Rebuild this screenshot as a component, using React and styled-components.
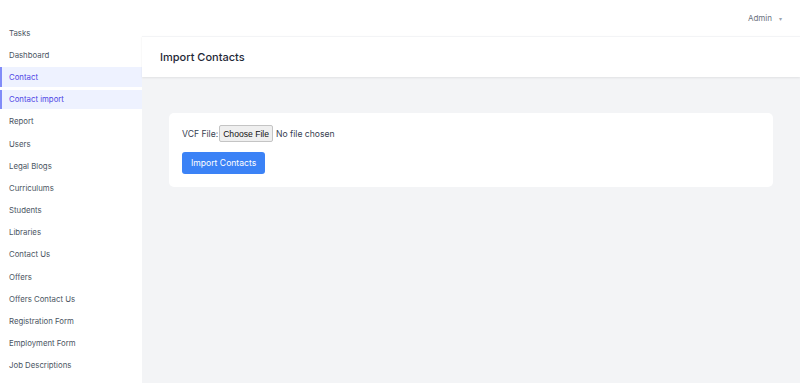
import React from "react";
import styled, { createGlobalStyle } from "styled-components";

const GlobalStyle = createGlobalStyle`
  html, body { margin: 0; padding: 0; background: #fff; }
  body { font-family: Inter, "Noto Sans", sans-serif; color: #374151; }
`;

const menu = [
  "Tasks",
  "Dashboard",
  "Contact",
  "Contact import",
  "Report",
  "Users",
  "Legal Blogs",
  "Curriculums",
  "Students",
  "Libraries",
  "Contact Us",
  "Offers",
  "Offers Contact Us",
  "Registration Form",
  "Employment Form",
  "Job Descriptions",
];
const activeItems = ["Contact", "Contact import"];

export default function App() {
  return (
    <>
      <GlobalStyle />
      <Page>
        <TopBar>
          <UserMenu>
            Admin <Caret>▾</Caret>
          </UserMenu>
        </TopBar>
        <Body>
          <Sidebar>
            {menu.map((m) => (
              <NavItem key={m} $active={activeItems.includes(m)}>
                {m}
              </NavItem>
            ))}
          </Sidebar>
          <Main>
            <Header>
              <Title>Import Contacts</Title>
            </Header>
            <Content>
              <Card>
                <FileRow>
                  <Label>VCF File:</Label>
                  <ChooseButton type="button">Choose File</ChooseButton>
                  <NoFile>No file chosen</NoFile>
                </FileRow>
                <SubmitButton type="button">Import Contacts</SubmitButton>
              </Card>
            </Content>
          </Main>
        </Body>
      </Page>
    </>
  );
}

const Page = styled.div`
  width: 800px;
  height: 383px;
  display: flex;
  flex-direction: column;
  overflow: hidden;
`;

const TopBar = styled.div`
  height: 36px;
  flex-shrink: 0;
  display: flex;
  align-items: center;
  justify-content: flex-end;
  padding-right: 18px;
  background: #fff;
`;

const UserMenu = styled.div`
  font-size: 8px;
  color: #6b7280;
  display: flex;
  align-items: center;
  gap: 7px;
`;

const Caret = styled.span`
  font-size: 6px;
  color: #9ca3af;
`;

const Body = styled.div`
  flex: 1;
  display: flex;
  min-height: 0;
`;

const Sidebar = styled.nav`
  width: 142px;
  flex-shrink: 0;
  background: #fff;
  display: flex;
  flex-direction: column;
  gap: 3px;
  margin-top: -13px;
`;

const NavItem = styled.div`
  height: 19.2px;
  display: flex;
  align-items: center;
  padding-left: 9px;
  font-size: 7.8px;
  color: ${({ $active }) => ($active ? "#4f46e5" : "#4b5563")};
  background: ${({ $active }) => ($active ? "#eef2ff" : "transparent")};
  box-shadow: ${({ $active }) => ($active ? "inset 2px 0 0 #818cf8" : "none")};
`;

const Main = styled.main`
  flex: 1;
  background: #f3f4f6;
  display: flex;
  flex-direction: column;
`;

const Header = styled.header`
  height: 40px;
  background: #fff;
  display: flex;
  align-items: center;
  padding-left: 18px;
  border-top: 1px solid #f3f4f6;
  box-shadow: 0 1px 2px rgba(0, 0, 0, 0.08);
`;

const Title = styled.h2`
  margin: 0;
  font-size: 11px;
  font-weight: 500;
  color: #1f2937;
`;

const Content = styled.div`
  padding: 36px 27px;
`;

const Card = styled.div`
  background: #fff;
  border-radius: 5px;
  padding: 12px 13px 13px;
  display: flex;
  flex-direction: column;
  align-items: flex-start;
  gap: 10px;
`;

const FileRow = styled.div`
  display: flex;
  align-items: center;
  font-size: 8.6px;
  color: #374151;
`;

const Label = styled.span`
  margin-right: 1px;
`;

const ChooseButton = styled.button`
  font-family: "Liberation Sans", Arial, sans-serif;
  font-size: 8.6px;
  color: #111;
  background: #efefef;
  border: 1px solid #c4c4c4;
  border-radius: 2px;
  height: 17px;
  padding: 0 3px;
  margin-right: 3px;
`;

const NoFile = styled.span`
  color: #374151;
`;

const SubmitButton = styled.button`
  font-family: Inter, "Noto Sans", sans-serif;
  font-size: 8.6px;
  color: #fff;
  background: #3b82f6;
  border: none;
  border-radius: 3px;
  height: 22px;
  padding: 0 9px;
`;
